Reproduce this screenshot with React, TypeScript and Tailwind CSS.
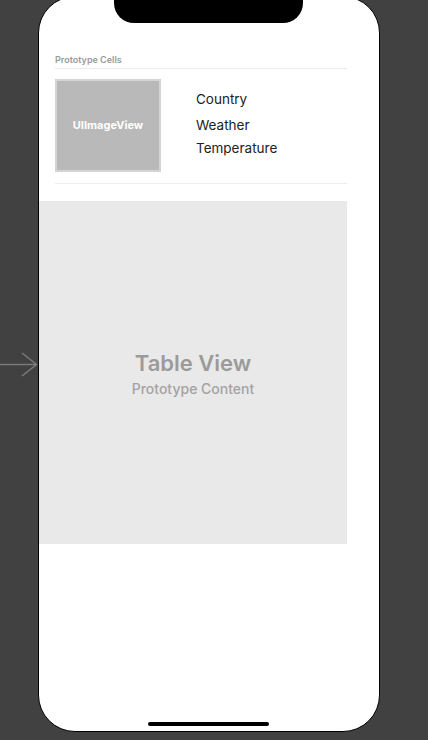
const font = { fontFamily: "Inter, 'Noto Sans', sans-serif" };

function EntryArrow() {
  return (
    <svg width="38" height="26" viewBox="0 0 38 26" className="mt-[352px] shrink-0">
      <path d="M0 12.5H36.5M22 1L36.5 12.5L22 24" fill="none" stroke="#7a7a7a" strokeWidth="1.5" />
    </svg>
  );
}

export default function App() {
  return (
    <div className="flex h-[740px] items-start overflow-hidden bg-[#414141]" style={font}>
      <EntryArrow />
      <div className="relative mt-[-4px] h-[736px] w-[342px] shrink-0 overflow-hidden rounded-[37px] border border-black bg-white">
        {/* notch */}
        <div className="absolute left-[75px] top-0 h-[26px] w-[189px] rounded-b-[20px] bg-black" />
        {/* home indicator */}
        <div className="absolute bottom-[5px] left-[109px] h-[4px] w-[121px] rounded-full bg-black" />

        <div className="flex flex-col pt-[57px]">
          <div className="ml-[16px] mr-[32px]">
            <div className="border-b border-[#ececec] pb-[2px] text-[9px] font-semibold leading-[12px] text-[#9a9a9a]">
              Prototype Cells
            </div>
            <div className="flex border-b border-[#ececec] pb-[11px] pt-[10px]">
              <div className="flex h-[93px] w-[106px] items-center justify-center border-2 border-[#d4d4d4] bg-[#b9b9b9]">
                <span className="text-[11px] font-bold text-white">UIImageView</span>
              </div>
              <div className="ml-[35px] flex flex-col pt-[11px] text-[13.5px] leading-[18px] text-[#222222]">
                <span>Country</span>
                <span className="mt-[8px]">Weather</span>
                <span className="mt-[5px]">Temperature</span>
              </div>
            </div>
          </div>
          <div className="mt-[17px] flex h-[343px] w-[308px] flex-col items-center justify-center gap-[3px] bg-[#e9e9e9] pt-[1px]">
            <span className="text-[22px] font-semibold leading-[28px] text-[#9b9b9b]">Table View</span>
            <span className="text-[14px] font-medium leading-[18px] text-[#a3a3a3]">Prototype Content</span>
          </div>
        </div>
      </div>
    </div>
  );
}
